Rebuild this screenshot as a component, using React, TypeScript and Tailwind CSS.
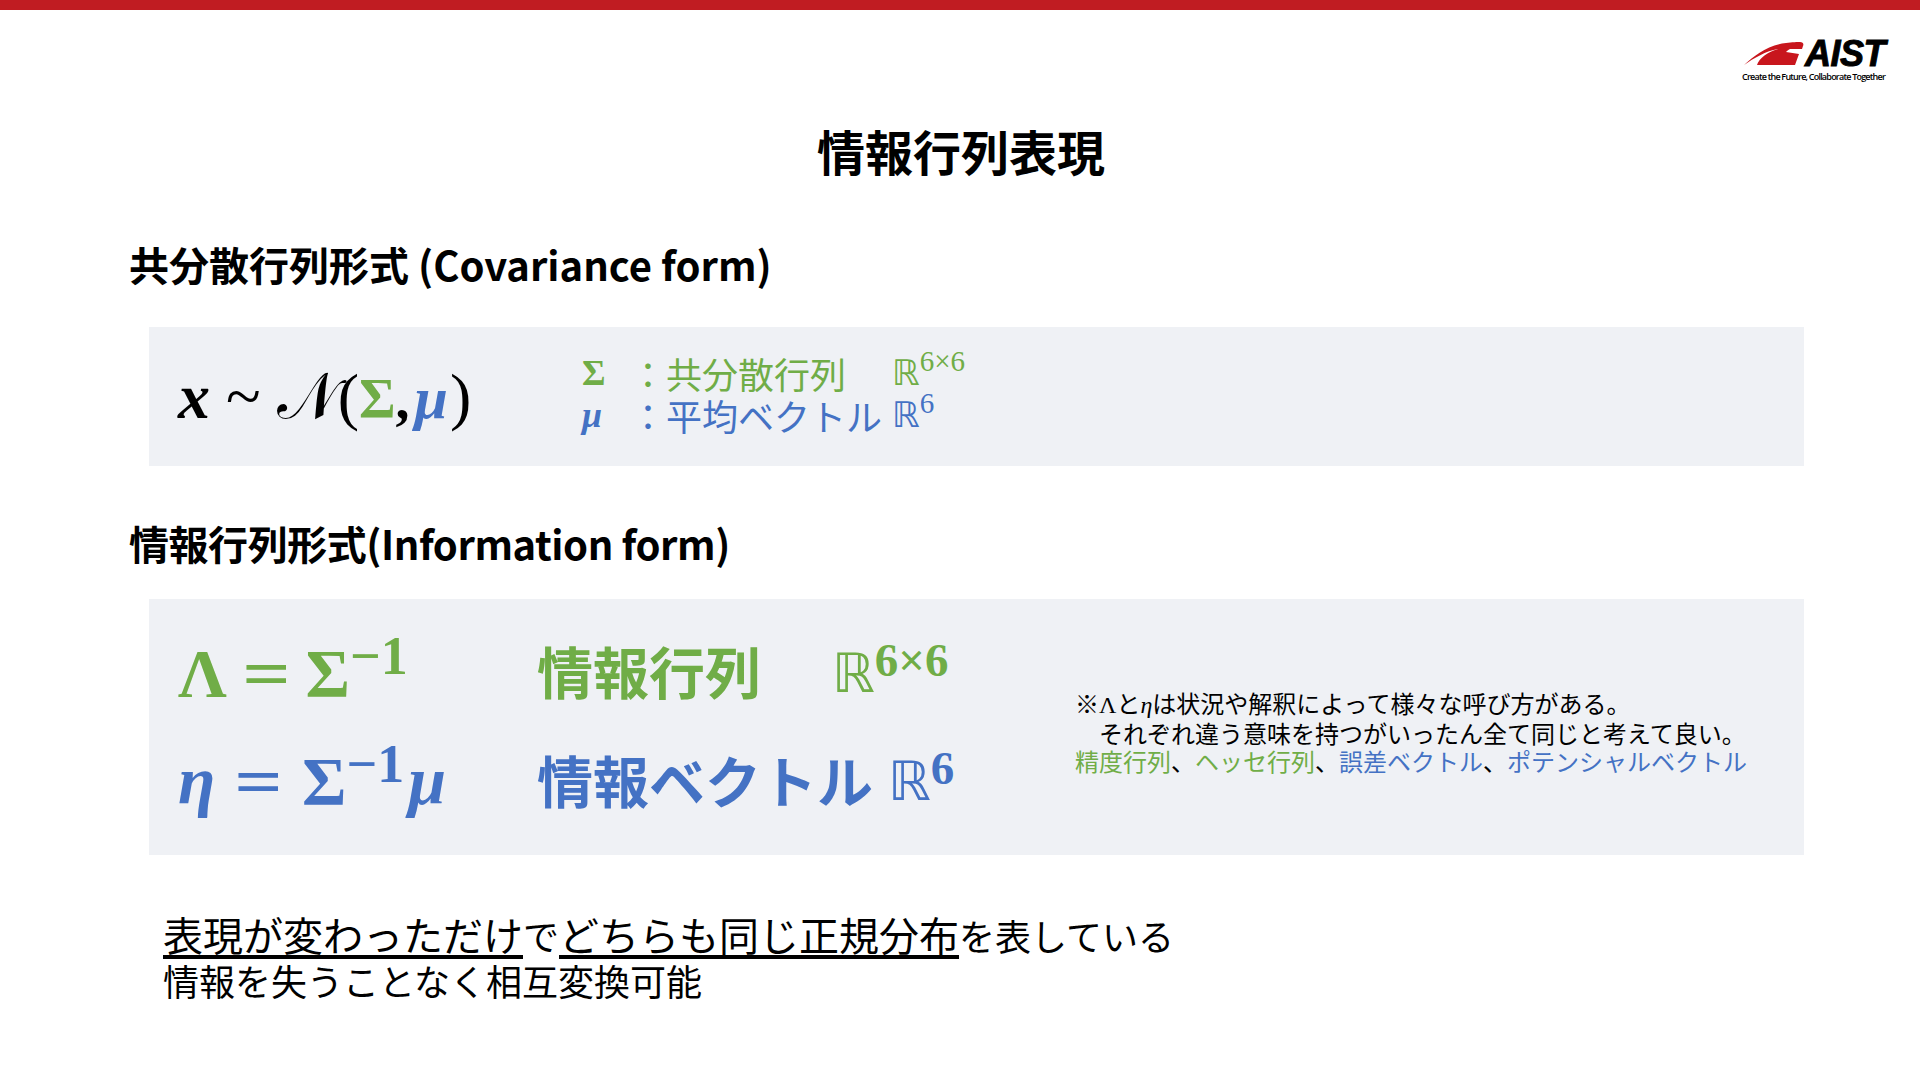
const jp = "font-['Noto_Sans_CJK_JP','Noto_Sans',sans-serif]";
const math = "font-['Liberation_Serif','DejaVu_Serif','Noto_Sans_CJK_JP',serif]";
const dbl = "font-['DejaVu_Sans',sans-serif] font-normal";
const green = 'text-[#70ad47]';
const blue = 'text-[#4472c4]';

function Logo() {
  return (
    <div className="flex flex-col items-end">
      <div className="flex items-center h-[28px]">
        <svg width="66" height="26" viewBox="0 0 64 26" className="mr-[-4px]">
          <path d="M0 24 C10 15 24 4 42 2 C48 1 54 1 56 1 C59 1 60 3 59 5 L58 8 L46 8 C44 9 43 10 42 11 L55 13 L51 24 L13 24 C15 17 24 11 34 8 C22 10 10 17 0 24 Z" fill="#c8161d" />
        </svg>
        <span className="font-['Liberation_Sans',sans-serif] font-bold italic text-[36px] leading-none tracking-[-0.5px] text-black [-webkit-text-stroke:1px_black]">AIST</span>
      </div>
      <span className="font-['Open_Sans',sans-serif] font-semibold text-[9px] leading-[12px] tracking-[-0.78px] mt-[3px] text-black whitespace-nowrap">Create the Future, Collaborate Together</span>
    </div>
  );
}

export default function App() {
  return (
    <div className={`w-[1920px] h-[1080px] bg-white text-black overflow-hidden flex flex-col ${jp}`}>
      <div className="h-[10px] bg-[#c01c22]" />

      <div className="flex justify-end pr-[35px] pt-[30px] h-[70px]">
        <Logo />
      </div>

      <h1 className="text-[48px] leading-[64px] font-bold text-center ml-[2px] mt-[38px]">情報行列表現</h1>

      <h2 className="text-[40px] leading-[54px] font-bold ml-[129px] mt-[55px] whitespace-nowrap">共分散行列形式 (Covariance form)</h2>

      <section className="ml-[149px] w-[1655px] h-[139px] mt-[36px] bg-[#eff1f5] flex items-center">
        <div className={`${math} font-bold text-[64px] leading-none w-[433px] pl-[29px] whitespace-nowrap`}>
          <i>x</i> <span className="font-normal">~</span> <span className="font-normal">𝒩</span>
          <span className="font-normal">(</span>
          <span className={`${green} text-[56px]`}>Σ</span><span className="text-[56px]">,</span><i className={`${blue} text-[60px] ml-[5px]`}>μ</i>
          <span className="font-normal ml-[2px]">)</span>
        </div>
        <div className="flex flex-col text-[36px] leading-[42px] mb-[5px]">
          <div className={`flex items-center ${green}`}>
            <b className={`${math} w-[48px]`}>Σ</b>
            <span className="whitespace-nowrap">：共分散行列</span>
            <span className={`ml-[46px] ${dbl} text-[35px]`}>ℝ<sup className={`${math} text-[29px]`}>6×6</sup></span>
          </div>
          <div className={`flex items-center ${blue}`}>
            <b className={`${math} italic w-[48px]`}>μ</b>
            <span className="whitespace-nowrap">：平均ベクトル</span>
            <span className={`ml-[10px] ${dbl} text-[35px]`}>ℝ<sup className={`${math} text-[29px]`}>6</sup></span>
          </div>
        </div>
      </section>

      <h2 className="text-[40px] leading-[54px] font-bold ml-[129px] mt-[50px] whitespace-nowrap tracking-[-0.45px]">情報行列形式(Information form)</h2>

      <section className="ml-[149px] w-[1655px] h-[256px] mt-[29px] bg-[#eff1f5] flex items-center">
        <div className="flex flex-col w-[926px] pl-[29px]">
          <div className={`flex items-center h-[108px] ${green}`}>
            <div className={`${math} font-bold text-[68px] w-[359px] whitespace-nowrap`}>
              Λ<span className="inline-block scale-x-[1.25] mx-[20px]">=</span>Σ<sup className="text-[54px] top-[-22px]">−1</sup>
            </div>
            <span className="font-bold text-[56px] whitespace-nowrap pb-[7px]">情報行列</span>
            <span className={`ml-[71px] ${dbl} text-[54px]`}>ℝ<sup className={`${math} font-bold text-[47px] top-[-16px]`}>6×6</sup></span>
          </div>
          <div className={`flex items-center h-[108px] ${blue}`}>
            <div className={`${math} font-bold text-[68px] w-[359px] whitespace-nowrap`}>
              <i>η</i><span className="inline-block scale-x-[1.25] mx-[24px]">=</span>Σ<sup className="text-[54px] top-[-22px]">−1</sup><i className="ml-[4px]">μ</i>
            </div>
            <span className="font-bold text-[56px] whitespace-nowrap pb-[5px]">情報ベクトル</span>
            <span className={`ml-[15px] ${dbl} text-[54px]`}>ℝ<sup className={`${math} font-bold text-[47px] top-[-16px]`}>6</sup></span>
          </div>
        </div>
        <div className="text-[24px] leading-[28px] whitespace-nowrap mt-[9px]">
          <p>※<span className={math}>Λ</span>と<i className={math}>η</i>は状況や解釈によって様々な呼び方がある。</p>
          <p className="pl-[24px]">それぞれ違う意味を持つがいったん全て同じと考えて良い。</p>
          <p>
            <span className={green}>精度行列</span>、<span className={green}>ヘッセ行列</span>、<span className={blue}>誤差ベクトル</span>、<span className={blue}>ポテンシャルベクトル</span>
          </p>
        </div>
      </section>

      <div className="ml-[163px] mt-[57px] text-[36px] leading-[45px] whitespace-nowrap">
        <p><span className="text-[40px] underline underline-offset-4">表現が変わっただけ</span>で<span className="text-[40px] underline underline-offset-4">どちらも同じ正規分布</span>を表している</p>
        <p>情報を失うことなく相互変換可能</p>
      </div>
    </div>
  );
}
